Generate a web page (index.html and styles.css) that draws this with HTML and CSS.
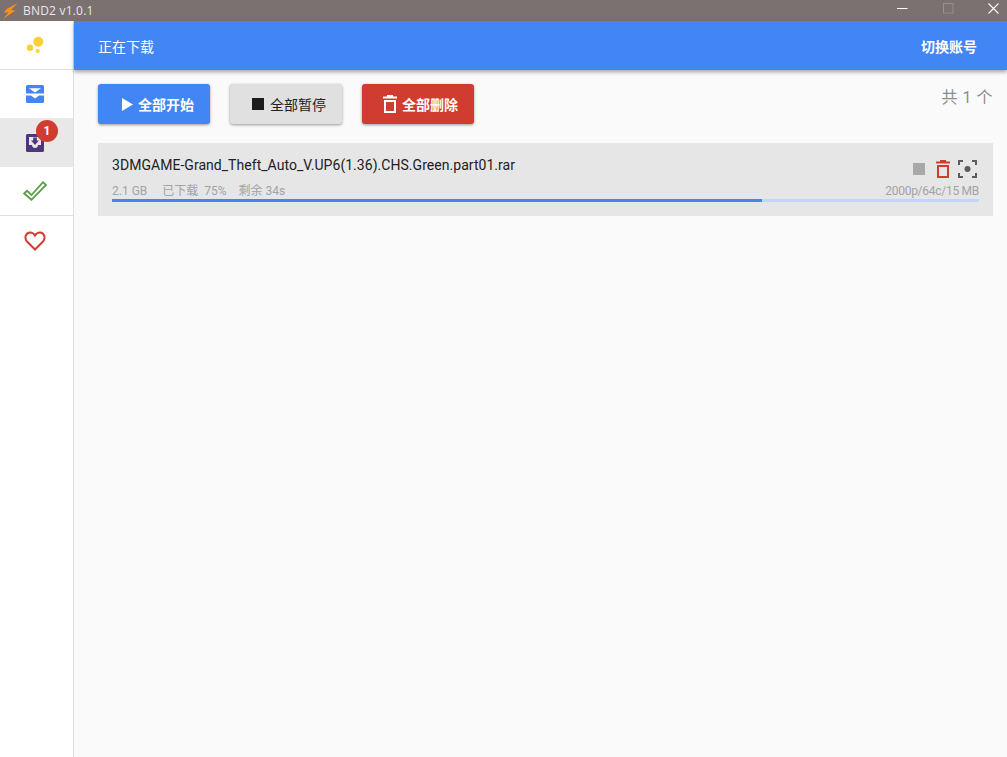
FILE: index.html
```html
<!DOCTYPE html>
<html lang="zh">
<head>
<meta charset="utf-8">
<title>BND2</title>
<link rel="stylesheet" href="styles.css">
</head>
<body>
<div class="app">
  <header class="titlebar">
    <svg class="bolt" width="15" height="16" viewBox="0 0 15 16"><path d="M14.500 0 L3.500 6 L1 9.500 L5.500 9.500 L0 16 L12.500 7.500 L8 7 Z" fill="#f5921e"/></svg>
    <span class="title">BND2 v1.0.1</span>
    <div class="winctl">
      <svg width="11" height="11" viewBox="0 0 11 11"><path d="M0 5.500H10.500" stroke="#fff" stroke-width="1"/></svg>
      <svg width="11" height="11" viewBox="0 0 11 11"><rect x="0.500" y="0.500" width="9.500" height="9.500" fill="none" stroke="#97918f"/></svg>
      <svg width="11" height="11" viewBox="0 0 11 11"><path d="M0.500 0.500L10.500 10.500M10.500 0.500L0.500 10.500" stroke="#fff" stroke-width="1.100"/></svg>
    </div>
  </header>
  <div class="body">
    <nav class="side">
      <div class="navitem">
        <svg width="24" height="24" viewBox="0 0 24 24"><circle cx="15.300" cy="8.700" r="5" fill="#fdd03b"/><circle cx="7" cy="14.700" r="3.200" fill="#fdd03b"/><circle cx="14.700" cy="18" r="2" fill="#fdd03b"/></svg>
      </div>
      <div class="navitem navitem-flat">
        <svg width="18" height="18" viewBox="0 0 18 18"><path fill="#4285f4" fill-rule="evenodd" d="M1.500 0H16.500A1.500 1.500 0 0 1 18 1.500V8.500H0V1.500A1.500 1.500 0 0 1 1.500 0ZM3 3.200H15L9 7.500Z"/><path fill="#4285f4" d="M0 10.500H5L9 13.500L13 10.500H18V16.500A1.500 1.500 0 0 1 16.500 18H1.500A1.500 1.500 0 0 1 0 16.500Z"/></svg>
      </div>
      <div class="navitem navitem-active">
        <svg width="18" height="18" viewBox="0 0 18 18"><path fill="#4f3480" fill-rule="evenodd" d="M1.500 0H16.500A1.500 1.500 0 0 1 18 1.500V16.500A1.500 1.500 0 0 1 16.500 18H1.500A1.500 1.500 0 0 1 0 16.500V1.500A1.500 1.500 0 0 1 1.500 0ZM3 3V11H6C6 13 7.500 14 9 14S12 13 12 11H15V3Z"/><path fill="#4f3480" d="M7.200 3.500H10.800V6.500H13L9 11L5 6.500H7.200Z"/></svg>
        <span class="badge">1</span>
      </div>
      <div class="navitem">
        <svg width="24" height="20" viewBox="0 0 24 20"><path fill="none" stroke="#5a9e47" stroke-width="1.800" d="M1.200 12.500L4 9.800L8.500 14L20 1.200L23 4L8.500 18.800Z"/></svg>
      </div>
      <div class="navitem">
        <svg width="22" height="20" viewBox="0 0 22 20"><path fill="none" stroke="#d13c30" stroke-width="2" d="M11 18.500L3 10.500C0 7 1.800 1.500 6 1.500C8.200 1.500 10 2.700 11 4.500C12 2.700 13.800 1.500 16 1.500C20.200 1.500 22 7 19 10.500Z"/></svg>
      </div>
    </nav>
    <main class="main">
      <div class="appbar">
        <span class="appbar-title">正在下载</span>
        <span class="appbar-action">切换账号</span>
      </div>
      <div class="content">
        <div class="toolbar">
          <button class="btn btn-blue">
            <svg width="11" height="13" viewBox="0 0 11 13"><path d="M0 0L11 6.500L0 13Z" fill="#fff"/></svg>
            全部开始
          </button>
          <button class="btn btn-grey">
            <svg width="12" height="12" viewBox="0 0 12 12"><rect width="12" height="12" fill="#1c1c1c"/></svg>
            全部暂停
          </button>
          <button class="btn btn-red">
            <svg width="14" height="18" viewBox="0 0 14 18"><path fill="none" stroke="#fff" stroke-width="2" d="M0 2.500H14M4 1H10M2 6H12V17H2Z"/></svg>
            全部删除
          </button>
          <span class="count">共 1 个</span>
        </div>
        <article class="task">
          <div class="task-top">
            <span class="task-name">3DMGAME-Grand_Theft_Auto_V.UP6(1.36).CHS.Green.part01.rar</span>
            <div class="task-icons">
              <svg class="ic-stop" width="12" height="12" viewBox="0 0 12 12"><rect width="12" height="12" fill="#a9a9a9"/></svg>
              <svg class="ic-trash" width="14" height="18" viewBox="0 0 14 18"><path fill="none" stroke="#d13c30" stroke-width="2" d="M0 2.500H14M4 1H10M2 6H12V17H2Z"/></svg>
              <svg width="19" height="18" viewBox="0 0 19 18"><path fill="none" stroke="#5c5c5c" stroke-width="2" d="M1 5V1H5M14 1H18V5M18 13V17H14M5 17H1V13"/><circle cx="9.500" cy="9" r="3" fill="#5c5c5c"/></svg>
            </div>
          </div>
          <div class="task-meta">
            <div class="meta-left"><span class="meta-size">2.1 GB</span><span class="meta-done">已下载 75%</span><span>剩余 34s</span></div>
            <span class="meta-right">2000p/64c/15 MB</span>
          </div>
          <div class="progress"><div class="progress-fill" style="width:75%"></div></div>
        </article>
      </div>
    </main>
  </div>
</div>
</body>
</html>
```
FILE: styles.css
```css
* { box-sizing: border-box; }
html, body { margin: 0; height: 100%; overflow: hidden; }
body { font-family: Roboto, "Noto Sans CJK SC", sans-serif; color: #212121; background: #fafafa; }
.app { display: flex; flex-direction: column; width: 1007px; height: 757px; }
.titlebar { flex: 0 0 21px; display: flex; align-items: center; background: #7a7170; color: #e8e8e8; font-size: 12px; padding-left: 3px; }
.bolt { margin-right: 5px; }
.title { font-family: "Open Sans", sans-serif; letter-spacing: 0.2px; }
.winctl { margin-left: auto; display: flex; gap: 34.5px; padding: 0 8px 4px 0; }
.body { flex: 1; display: flex; min-height: 0; }
.side { flex: 0 0 74px; background: #fff; border-right: 1px solid #e0e0e0; }
.navitem { position: relative; height: 49px; display: flex; align-items: center; justify-content: center; padding-right: 3px; border-bottom: 1px solid #e0e0e0; }
.navitem:last-child { border-bottom: 0; }
.navitem-flat { height: 48px; border-bottom: 0; }
.navitem-active { background: #e8e8e8; border-bottom: 0; }
.badge { position: absolute; left: 36px; top: 2px; width: 22px; height: 22px; border-radius: 50%; background: #d13c30; color: #fff; font-size: 12px; font-weight: 700; display: flex; align-items: center; justify-content: center; }
.main { flex: 1; display: flex; flex-direction: column; min-width: 0; }
.appbar { flex: 0 0 49px; display: flex; align-items: center; justify-content: space-between; background: #4285f4; color: #fff; font-size: 14px; padding: 0 30px 0 24px; box-shadow: 0 2px 4px rgba(0,0,0,.35); position: relative; }
.appbar-action { font-weight: 700; }
.content { flex: 1; padding: 14px 14px 0 24px; }
.toolbar { display: flex; align-items: flex-start; gap: 20px; }
.btn { width: 112px; height: 40px; border: 0; border-radius: 3px; display: flex; align-items: center; justify-content: flex-start; gap: 5px; font: 700 14px Roboto, "Noto Sans CJK SC", sans-serif; box-shadow: 0 1px 3px rgba(0,0,0,.4); }
.btn-blue { background: #4285f4; color: #fff; padding: 0 0 0 24px; }
.btn-grey { background: #e0e0e0; color: #212121; font-weight: 400; padding: 0 0 0 22px; gap: 6px; }
.btn-red { background: #d13c30; color: #fff; padding: 0 0 0 21px; }
.count { margin-left: auto; color: #8c8c8c; font-size: 16px; letter-spacing: 0.5px; }
.task { margin-top: 19px; height: 73px; background: #e6e6e6; padding: 12px 14px 0; }
.task-top { display: flex; justify-content: space-between; align-items: flex-start; height: 29px; font-size: 14px; }
.task-name { line-height: 20px; letter-spacing: 0.04px; }
.task-icons { display: flex; align-items: center; margin: 5px 2px 0 0; }
.ic-stop { margin-right: 11px; }
.ic-trash { margin-right: 8px; }
.task-meta { display: flex; justify-content: space-between; font-size: 12px; line-height: 14px; color: #a3a3a3; }
.meta-left { display: flex; gap: 12px; }
.meta-size { margin-right: 3px; }
.meta-done { word-spacing: 3px; }
.meta-right { letter-spacing: -0.27px; }
.progress { margin-top: 1px; height: 3px; background: #bfd6fa; }
.progress-fill { height: 100%; background: #4285f4; }
```
